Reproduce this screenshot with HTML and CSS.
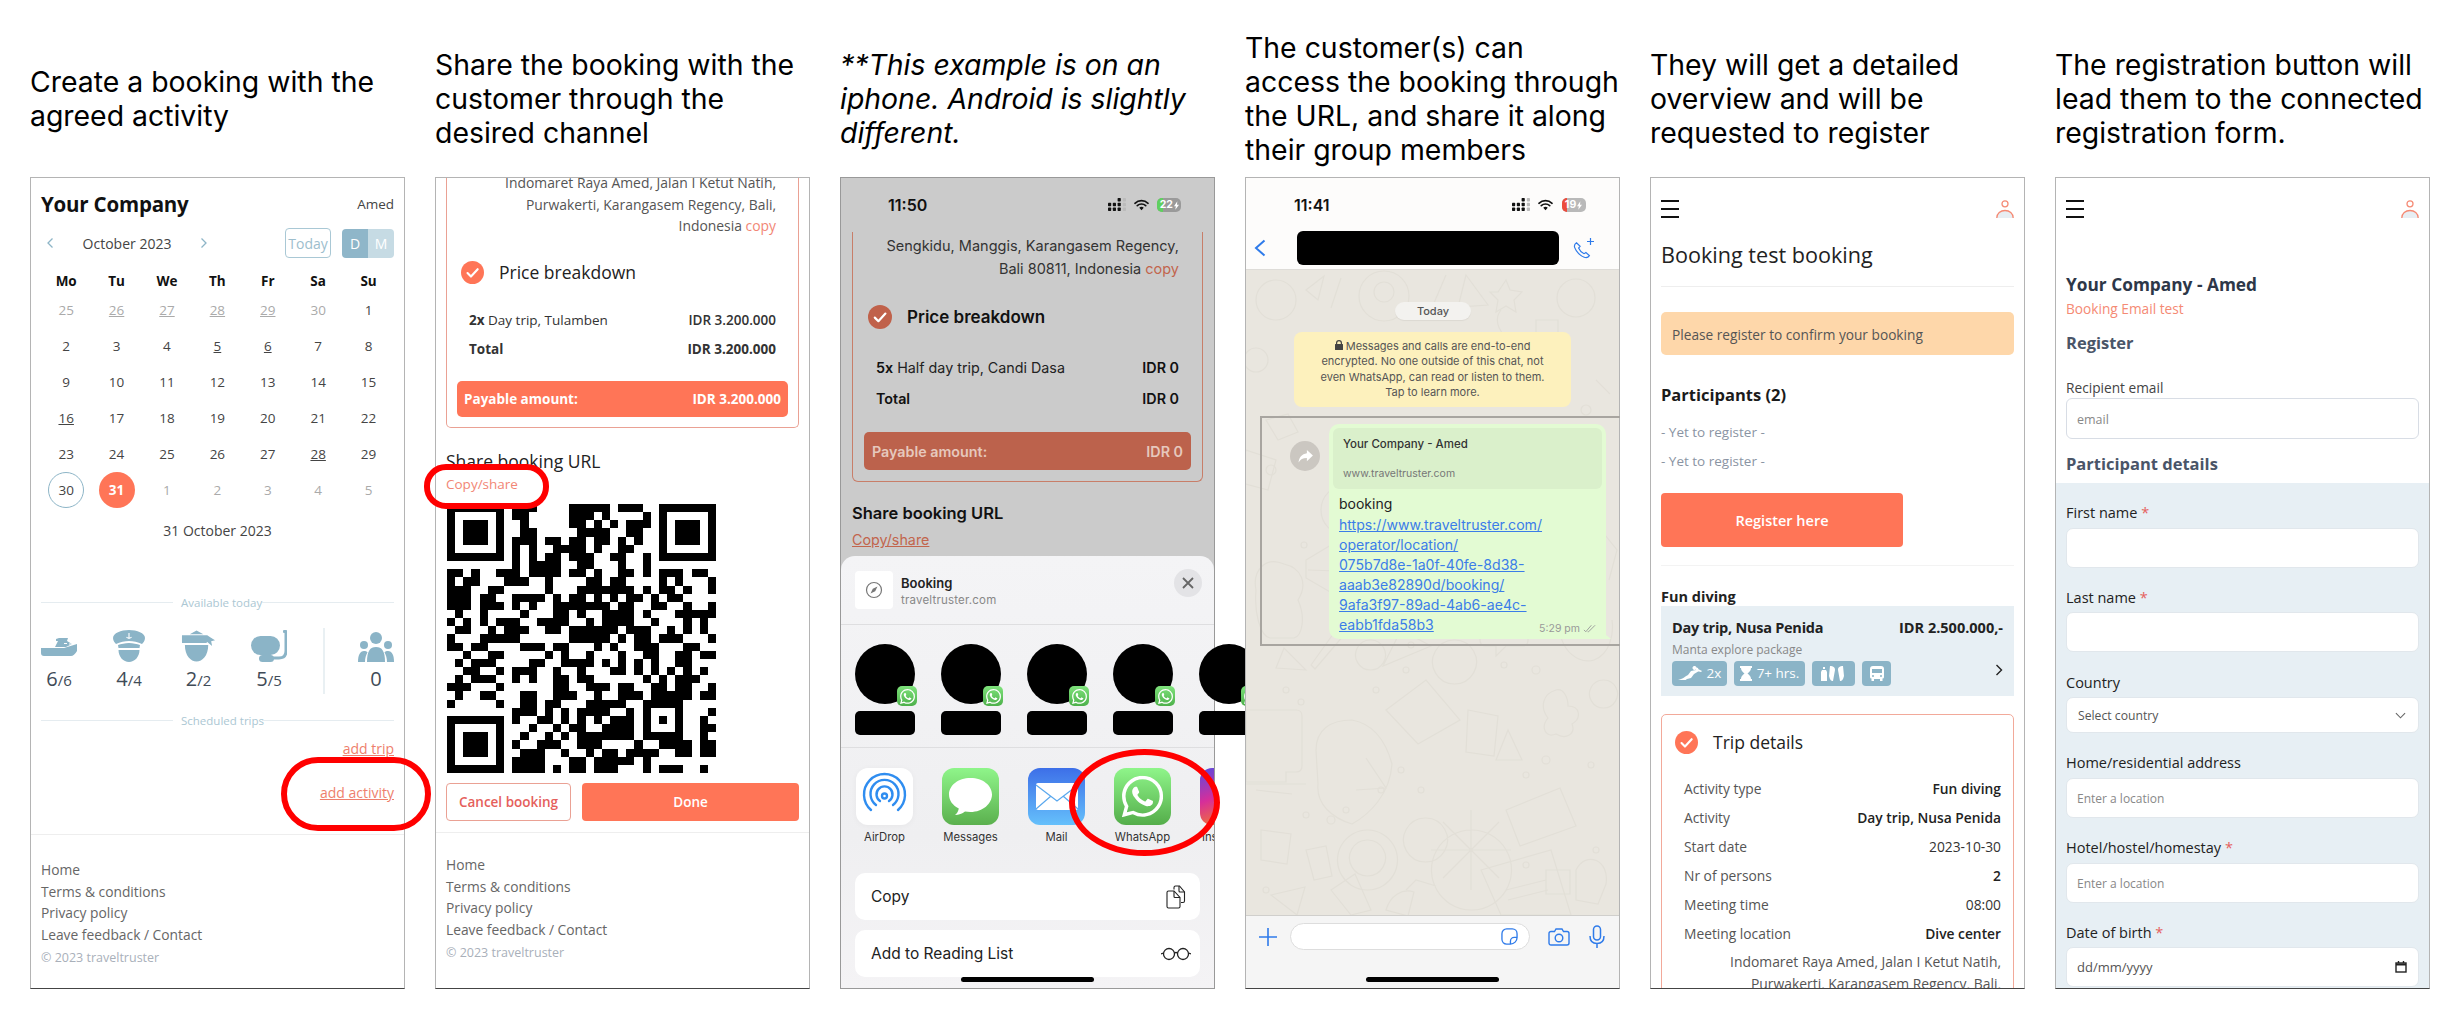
FILE: index.html
```html
<!DOCTYPE html>
<html lang="en">
<head>
<meta charset="utf-8">
<title>Booking flow</title>
<link rel="stylesheet" href="styles.css">
</head>
<body>
<svg class="defs" width="0" height="0" aria-hidden="true">
  <defs>
    <symbol id="check" viewBox="0 0 24 24"><circle cx="12" cy="12" r="12" fill="currentColor"/><path d="M6.8 12.6l3.6 3.6 7-7.6" fill="none" stroke="#fff" stroke-width="2.2" stroke-linecap="round" stroke-linejoin="round"/></symbol>
    <symbol id="wa" viewBox="0 0 24 24"><path fill="#fff" d="M17.472 14.382c-.297-.149-1.758-.867-2.03-.967-.273-.099-.471-.148-.67.15-.197.297-.767.966-.94 1.164-.173.199-.347.223-.644.075-.297-.15-1.255-.463-2.39-1.475-.883-.788-1.48-1.761-1.653-2.059-.173-.297-.018-.458.13-.606.134-.133.298-.347.446-.52.149-.174.198-.298.298-.497.099-.198.05-.371-.025-.52-.075-.149-.669-1.612-.916-2.207-.242-.579-.487-.5-.669-.51-.173-.008-.371-.01-.57-.01-.198 0-.52.074-.792.372-.272.297-1.04 1.016-1.04 2.479 0 1.462 1.065 2.875 1.213 3.074.149.198 2.096 3.2 5.077 4.487.709.306 1.262.489 1.694.625.712.227 1.36.195 1.871.118.571-.085 1.758-.719 2.006-1.413.248-.694.248-1.289.173-1.413-.074-.124-.272-.198-.57-.347m-5.421 7.403h-.004a9.87 9.87 0 01-5.031-1.378l-.361-.214-3.741.982.998-3.648-.235-.374a9.86 9.86 0 01-1.51-5.26c.001-5.45 4.436-9.884 9.888-9.884 2.64 0 5.122 1.03 6.988 2.898a9.825 9.825 0 012.893 6.994c-.003 5.45-4.437 9.884-9.885 9.884m8.413-18.297A11.815 11.815 0 0012.05 0C5.495 0 .16 5.335.157 11.892c0 2.096.547 4.142 1.588 5.945L.057 24l6.305-1.654a11.882 11.882 0 005.683 1.448h.005c6.554 0 11.89-5.335 11.893-11.893a11.821 11.821 0 00-3.48-8.413z"/></symbol>
    <symbol id="burger" viewBox="0 0 18 18"><path d="M0 1h18M0 9h18M0 17h18" stroke="#111" stroke-width="2"/></symbol>
    <symbol id="user" viewBox="0 0 18 18"><path d="M1 18c0-4.500 3.500-7 8-7s8 2.500 8 7z" fill="#e7eef3"/><path d="M.8 18c0-4.500 3.700-7.500 8.200-7.500s8.200 3 8.200 7.500" fill="none" stroke="#f58a74" stroke-width="1.300"/><circle cx="9" cy="3.800" r="3" fill="none" stroke="#f58a74" stroke-width="1.300"/></symbol>
    <symbol id="signal" viewBox="0 0 18 14"><g fill="#111"><rect x="0" y="9.500" width="3.200" height="3.500" rx=".7"/><rect x="0" y="4.800" width="3.200" height="3.500" rx=".7"/><rect x="4.800" y="9.500" width="3.200" height="3.500" rx=".7"/><rect x="4.800" y="4.800" width="3.200" height="3.500" rx=".7"/><rect x="9.600" y="9.500" width="3.200" height="3.500" rx=".7"/><rect x="9.600" y="4.800" width="3.200" height="3.500" rx=".7"/><rect x="9.600" y="0" width="3.200" height="3.500" rx=".7"/></g><g fill="#bbb"><rect x="14.800" y="0" width="3.200" height="3.500" rx=".7"/><rect x="14.800" y="4.800" width="3.200" height="3.500" rx=".7"/><rect x="14.800" y="9.500" width="3.200" height="3.500" rx=".7"/></g></symbol>
    <symbol id="wifi" viewBox="0 0 16 12"><path d="M1 4.200a10 10 0 0 1 14 0M3.500 6.700a6.500 6.500 0 0 1 9 0" fill="none" stroke="#111" stroke-width="1.700" stroke-linecap="round"/><path d="M8 11.500L5.600 9a3.400 3.400 0 0 1 4.800 0z" fill="#111"/></symbol>
  </defs>
</svg>

<main class="board">

  <section class="col">
    <h2 class="cap">Create a booking with the agreed activity</h2>
    <div class="frame">
      <div class="co-head"><strong class="co-name">Your Company</strong><span class="co-loc">Amed</span></div>
      <div class="month-row">
        <div class="month-nav">
          <svg class="chev" viewBox="0 0 8 12"><path d="M6.500 1.500L2 6l4.500 4.500"/></svg>
          <span class="month-name">October 2023</span>
          <svg class="chev" viewBox="0 0 8 12"><path d="M1.500 1.500L6 6l-4.500 4.500"/></svg>
        </div>
        <button class="today">Today</button>
        <div class="toggle"><span class="tog-d">D</span><span class="tog-m">M</span></div>
      </div>
      <div class="cal">
        <b>Mo</b><b>Tu</b><b>We</b><b>Th</b><b>Fr</b><b>Sa</b><b>Su</b>
        <span class="off">25</span><span class="off u">26</span><span class="off u">27</span><span class="off u">28</span><span class="off u">29</span><span class="off">30</span><span>1</span>
        <span>2</span><span>3</span><span>4</span><span class="u">5</span><span class="u">6</span><span>7</span><span>8</span>
        <span>9</span><span>10</span><span>11</span><span>12</span><span>13</span><span>14</span><span>15</span>
        <span class="u">16</span><span>17</span><span>18</span><span>19</span><span>20</span><span>21</span><span>22</span>
        <span>23</span><span>24</span><span>25</span><span>26</span><span>27</span><span class="u">28</span><span>29</span>
        <span><i class="ring">30</i></span><span><i class="sel">31</i></span><span class="off">1</span><span class="off">2</span><span class="off">3</span><span class="off">4</span><span class="off">5</span>
      </div>
      <p class="cal-date">31 October 2023</p>
      <div class="rule rule-a"><span>Available today</span></div>
      <div class="stats">
        <div class="stat stat-boat">
          <svg class="ic-boat" viewBox="0 0 36 18"><path fill="#8bb4c7" d="M0 10h23l13-4v7q-3 5-6 5H3q-3 0-3-3zM14 9l3-6h-2V1l3-1h9l-1 3 5 3-6 3z"/><path d="M23 5.500h3M28 6h3" stroke="#fff" stroke-width="1"/></svg>
          <div class="num">6<small>/6</small></div>
        </div>
        <div class="stat stat-cap">
          <svg class="ic-cap" viewBox="0 0 32 32"><path fill="#8bb4c7" d="M16 0C8 0 0 3 0 8c0 3 2 5 3 6 4-2 9-3 13-3s9 1 13 3c1-1 3-3 3-6 0-5-8-8-16-8zM5 15c3-1 7-2 11-2s8 1 11 2l-.5 3H5.500zM5.500 20h21c0 7-5 12-10.500 12S5.500 27 5.500 20z"/><path d="M16 3v6M13.500 7c1 1.500 4 1.500 5 0" stroke="#fff" stroke-width="1.100" fill="none"/></svg>
          <div class="num">4<small>/4</small></div>
        </div>
        <div class="stat stat-hat">
          <svg class="ic-hat" viewBox="0 0 36 32"><path fill="#8bb4c7" d="M16 0l7 4H9zM1 5h26l3 2 5 3-4 1 1 5-5-4-1 1H1zM4 15h24c0 11-6 17-12 17S4 26 4 15z"/></svg>
          <div class="num">2<small>/2</small></div>
        </div>
        <div class="stat stat-mask">
          <svg class="ic-mask" viewBox="0 0 36 32"><rect x="0" y="6" width="29" height="19" rx="9.500" fill="#8bb4c7"/><path d="M35 2v19q0 7-7 7h-6" fill="none" stroke="#8bb4c7" stroke-width="3" stroke-linecap="round"/><rect x="8" y="25" width="15" height="7" rx="3.500" fill="#8bb4c7"/><rect x="32" y="0" width="4" height="3" rx="1" fill="#8bb4c7"/></svg>
          <div class="num">5<small>/5</small></div>
        </div>
        <div class="stat stat-people">
          <svg class="ic-people" viewBox="0 0 36 30"><g fill="#8bb4c7"><circle cx="18" cy="6" r="6"/><circle cx="6" cy="13" r="4"/><circle cx="30" cy="13" r="4"/><path d="M9 30c0-11 3-15 9-15s9 4 9 15zM0 30c0-7 2-11 6-11 2 0 3 .5 3.500 1.500C8 23 7 26 7 30zM36 30c0-7-2-11-6-11-2 0-3 .5-3.500 1.500C28 23 29 26 29 30z"/></g></svg>
          <div class="num">0</div>
        </div>
      </div>
      <div class="rule rule-b"><span>Scheduled trips</span></div>
      <a class="add add-trip">add trip</a>
      <a class="add add-act">add activity</a>
      <footer class="foot foot-a">
        <a>Home</a><a>Terms &amp; conditions</a><a>Privacy policy</a><a>Leave feedback / Contact</a><small>© 2023 traveltruster</small>
      </footer>
    </div>
  </section>

  <section class="col">
    <h2 class="cap">Share the booking with the customer through the desired channel</h2>
    <div class="frame">
      <div class="pcard">
        <p class="addr">Indomaret Raya Amed, Jalan I Ketut Natih,<br>Purwakerti, Karangasem Regency, Bali,<br>Indonesia <span class="sal">copy</span></p>
        <div class="chk-head"><svg class="chk"><use href="#check"/></svg><span>Price breakdown</span></div>
        <div class="prow"><span><b>2x</b> Day trip, Tulamben</span><em>IDR 3.200.000</em></div>
        <div class="prow"><b>Total</b><b>IDR 3.200.000</b></div>
        <div class="pay"><span>Payable amount:</span><span>IDR 3.200.000</span></div>
      </div>
      <h3 class="share">Share booking URL</h3>
      <a class="copyshare">Copy/share</a>
      <svg class="qr" viewBox="0 0 33 33" shape-rendering="crispEdges">
        <g fill="#000">
          <path d="M0 0h7v7H0zM1 1v5h5V1zM2 2h3v3H2zM26 0h7v7h-7zM27 1v5h5V1zM28 2h3v3h-3zM0 26h7v7H0zM1 27v5h5v-5zM2 28h3v3H2z" fill-rule="evenodd"/>
        </g>
        <path stroke="#000" stroke-width="1" fill="none" d="M8 .5h3M15 .5h5M21 .5h3M8 1.500h2M15 1.500h3M19 1.500h1M24 1.500h1M9 2.500h1M15 2.500h2M18 2.500h1M20 2.500h1M22 2.500h3M9 3.500h2M16 3.500h4M22 3.500h2M8 4.500h3M12 4.500h2M15 4.500h2M18 4.500h2M21 4.500h1M23 4.500h1M8 5.500h1M10 5.500h1M13 5.500h4M18 5.500h1M21 5.500h2M8 6.500h1M10 6.500h1M12 6.500h2M15 6.500h3M20 6.500h2M24 6.500h1M8 7.500h1M10 7.500h4M16 7.500h2M21 7.500h1M24 7.500h1M0 8.500h2M3 8.500h1M6 8.500h3M10 8.500h4M15 8.500h2M18 8.500h1M21 8.500h2M24 8.500h1M26 8.500h3M30 8.500h2M0 9.500h1M2 9.500h2M7 9.500h3M12 9.500h1M17 9.500h2M20 9.500h2M26 9.500h1M28 9.500h1M32 9.500h1M0 10.500h3M5 10.500h2M12 10.500h1M16 10.500h7M24 10.500h1M26 10.500h2M29 10.500h1M32 10.500h1M0 11.500h3M4 11.500h2M8 11.500h4M13 11.500h1M15 11.500h2M18 11.500h1M20 11.500h1M22 11.500h2M25 11.500h1M27 11.500h2M0 12.500h3M4 12.500h3M8 12.500h1M10 12.500h1M13 12.500h7M21 12.500h2M25 12.500h2M29 12.500h1M32 12.500h1M1 13.500h1M4 13.500h1M9 13.500h1M13 13.500h2M16 13.500h1M19 13.500h4M24 13.500h1M28 13.500h5M0 14.500h1M2 14.500h1M4 14.500h1M6 14.500h3M11 14.500h4M17 14.500h1M19 14.500h4M25 14.500h1M29 14.500h1M31 14.500h1M1 15.500h2M5 15.500h1M7 15.500h3M12 15.500h2M15 15.500h6M22 15.500h3M27 15.500h1M29 15.500h1M31 15.500h1M0 16.500h1M4 16.500h5M15 16.500h5M21 16.500h1M23 16.500h2M26 16.500h3M32 16.500h1M0 17.500h2M3 17.500h2M9 17.500h3M13 17.500h2M18 17.500h1M20 17.500h1M23 17.500h3M29 17.500h2M2 18.500h1M5 18.500h2M12 18.500h1M14 18.500h1M17 18.500h1M21 18.500h1M24 18.500h2M28 18.500h2M31 18.500h2M1 19.500h1M3 19.500h3M10 19.500h2M14 19.500h4M19 19.500h1M21 19.500h1M23 19.500h1M25 19.500h1M28 19.500h2M2 20.500h2M6 20.500h1M8 20.500h3M13 20.500h1M16 20.500h1M20 20.500h2M23 20.500h1M25 20.500h1M27 20.500h1M29 20.500h1M31 20.500h1M1 21.500h1M3 21.500h3M8 21.500h1M10 21.500h1M13 21.500h2M16 21.500h2M24 21.500h1M26 21.500h1M28 21.500h3M0 22.500h3M6 22.500h1M13 22.500h2M17 22.500h3M21 22.500h2M25 22.500h2M28 22.500h2M32 22.500h1M1 23.500h1M4 23.500h2M9 23.500h2M13 23.500h3M18 23.500h1M21 23.500h3M25 23.500h5M31 23.500h2M0 24.500h1M6 24.500h1M9 24.500h2M12 24.500h2M17 24.500h5M24 24.500h5M8 25.500h3M12 25.500h1M14 25.500h1M16 25.500h4M22 25.500h1M24 25.500h1M28 25.500h1M32 25.500h1M8 26.500h1M11 26.500h2M14 26.500h1M16 26.500h1M18 26.500h1M20 26.500h3M24 26.500h1M26 26.500h1M28 26.500h1M31 26.500h1M10 27.500h1M13 27.500h1M15 27.500h2M19 27.500h4M24 27.500h1M28 27.500h1M31 27.500h2M9 28.500h1M12 28.500h1M14 28.500h1M16 28.500h7M24 28.500h5M31 28.500h1M8 29.500h1M11 29.500h3M16 29.500h3M23 29.500h1M26 29.500h4M31 29.500h2M9 30.500h3M14 30.500h1M17 30.500h1M19 30.500h2M22 30.500h4M28 30.500h2M31 30.500h2M8 31.500h4M15 31.500h2M18 31.500h5M24 31.500h1M8 32.500h4M13 32.500h1M15 32.500h2M18 32.500h3M24 32.500h1M26 32.500h3M31 32.500h1"/>
      </svg>
      <div class="actions"><button class="btn-cancel">Cancel booking</button><button class="btn-done">Done</button></div>
      <footer class="foot foot-b">
        <a>Home</a><a>Terms &amp; conditions</a><a>Privacy policy</a><a>Leave feedback / Contact</a><small>© 2023 traveltruster</small>
      </footer>
    </div>
  </section>

  <section class="col">
    <h2 class="cap cap-it">**This example is on an iphone. Android is slightly different.</h2>
    <div class="frame frame-share">
      <div class="status status-share">
        <span class="clock">11:50</span>
        <svg class="st-signal"><use href="#signal"/></svg>
        <svg class="st-wifi"><use href="#wifi"/></svg>
        <span class="batt batt-g"><span class="batt-fill"></span><span class="batt-t">22<svg viewBox="0 0 6 10"><path fill="#fff" d="M4 0L0 6h2.200L1.600 10 6 4H3.600z"/></svg></span></span>
      </div>
      <div class="dim-card">
        <p class="addr">Sengkidu, Manggis, Karangasem Regency,<br>Bali 80811, Indonesia <span class="dim-sal">copy</span></p>
        <div class="chk-head chk-dim"><svg class="chk"><use href="#check"/></svg><span>Price breakdown</span></div>
        <div class="prow"><span><b>5x</b> Half day trip, Candi Dasa</span><b>IDR 0</b></div>
        <div class="prow prow-total"><b>Total</b><b>IDR 0</b></div>
        <div class="pay pay-dim"><span>Payable amount:</span><span>IDR 0</span></div>
      </div>
      <h3 class="share share-dim">Share booking URL</h3>
      <a class="copyshare cs-dim">Copy/share</a>
      <div class="sheet">
        <div class="sh-head">
          <span class="sh-thumb"><svg viewBox="0 0 18 18"><circle cx="9" cy="9" r="7.500" fill="none" stroke="#777" stroke-width="1.200"/><path d="M12.500 5.500L10.200 10.200 5.500 12.500 7.800 7.800z" fill="#777"/></svg></span>
          <div class="sh-title"><strong>Booking</strong><span>traveltruster.com</span></div>
          <span class="sh-close"><svg viewBox="0 0 12 12"><path d="M1 1l10 10M11 1L1 11" stroke="#666" stroke-width="1.800"/></svg></span>
        </div>
        <div class="contacts">
          <div class="contact"><i class="av"></i><span class="wab"><svg><use href="#wa"/></svg></span><i class="nm"></i></div>
          <div class="contact"><i class="av"></i><span class="wab"><svg><use href="#wa"/></svg></span><i class="nm"></i></div>
          <div class="contact"><i class="av"></i><span class="wab"><svg><use href="#wa"/></svg></span><i class="nm"></i></div>
          <div class="contact"><i class="av"></i><span class="wab"><svg><use href="#wa"/></svg></span><i class="nm"></i></div>
          <div class="contact"><i class="av"></i><span class="wab"><svg><use href="#wa"/></svg></span><i class="nm"></i></div>
        </div>
        <div class="apps">
          <div class="app"><span class="aic aic-air"><svg viewBox="0 0 57 57" fill="none" stroke="#2f8df0" stroke-width="2.400" stroke-linecap="round"><path d="M15 42a20.500 20.500 0 1 1 27 0"/><path d="M20 37a14 14 0 1 1 17 0"/><path d="M24 33a8 8 0 1 1 9 0"/><circle cx="28.500" cy="28" r="2.500"/></svg></span><span class="alb">AirDrop</span></div>
          <div class="app"><span class="aic aic-msg"><svg viewBox="0 0 57 57"><path fill="#fff" d="M28.500 10C16 10 7 17.500 7 26.500c0 6 3.800 11 9.800 14-.4 2.500-1.800 5-3.800 6.500 3.800 0 7.300-1.300 10-3.500 1.700.3 3.500.5 5.500.5C41 44 50 35.500 50 26.500S41 10 28.500 10z"/></svg></span><span class="alb">Messages</span></div>
          <div class="app"><span class="aic aic-mail"><svg viewBox="0 0 57 57"><rect x="8" y="15" width="42" height="27" rx="2" fill="#fff"/><path d="M8 17l21 16 21-16M8 41l15-13M50 41L35 28" fill="none" stroke="#5aa8ee" stroke-width="1.200"/></svg></span><span class="alb">Mail</span></div>
          <div class="app"><span class="aic aic-wa"><svg viewBox="-4.500 -4.500 33 33"><use href="#wa" width="24" height="24"/></svg></span><span class="alb">WhatsApp</span></div>
          <div class="app"><span class="aic aic-ig"></span><span class="alb">Instagram</span></div>
        </div>
        <div class="sh-act sh-act-a"><span>Copy</span><svg viewBox="0 0 20 24" fill="none" stroke="#222" stroke-width="1.100"><path d="M8 4.500V2.500q0-1.500 1.500-1.500h4l5 6v9q0 1.500-1.500 1.500H15"/><path d="M13 1v5q0 1 1 1h4.500"/><path d="M1 7.500Q1 6 2.500 6H8l6 6.500v9q0 1.500-1.500 1.500h-10Q1 23 1 21.500z"/><path d="M8 6v5.500q0 1 1 1h5"/></svg></div>
        <div class="sh-act sh-act-b"><span>Add to Reading List</span><svg viewBox="0 0 30 14" fill="none" stroke="#222" stroke-width="1.300"><circle cx="8" cy="7" r="5.500"/><circle cx="22" cy="7" r="5.500"/><path d="M13.500 6q1.500-1 3 0M2.500 6L0 7M27.500 6l2.500 1"/></svg></div>
        <i class="homebar homebar-a"></i>
      </div>
    </div>
  </section>

  <section class="col">
    <h2 class="cap">The customer(s) can access the booking through the URL, and share it along their group members</h2>
    <div class="frame frame-wa">
      <div class="wa-top">
        <div class="status status-wa">
          <span class="clock">11:41</span>
          <svg class="st-signal"><use href="#signal"/></svg>
          <svg class="st-wifi"><use href="#wifi"/></svg>
          <span class="batt batt-r"><span class="batt-fill"></span><span class="batt-t">19<svg viewBox="0 0 6 10"><path fill="#fff" d="M4 0L0 6h2.200L1.600 10 6 4H3.600z"/></svg></span></span>
        </div>
        <div class="wa-nav">
          <svg class="wa-back" viewBox="0 0 12 18"><path d="M10.500 1.500L2 9l8.500 7.500" fill="none" stroke="#2f7bea" stroke-width="2"/></svg>
          <i class="wa-name"></i>
          <svg class="wa-call" viewBox="0 0 22 21" fill="none" stroke="#2f7bea" stroke-width="1.200"><path d="M3.500 4.800C1.500 6 1 7.500 1.700 9.600c1.400 3.800 5.500 8.200 9.500 9.700 2.200.8 4 .2 5.200-1.700l-3.500-3-1.800 1.100c-2.300-1-4.500-3.300-5.500-5.700l1.500-1.800z"/><path d="M15 6.500h7M18.500 3v7" transform="translate(-1 -3)"/></svg>
        </div>
      </div>
      <div class="wa-chat">
        <svg class="wall" viewBox="0 0 373 645" preserveAspectRatio="none" fill="none" stroke="#e2dfd7" stroke-width="1.200">
          <circle cx="30" cy="30" r="20"/><circle cx="138" cy="26" r="25"/><circle cx="138" cy="22" r="10"/><path d="M60 20l18-14-6 24zM95 8l-10 30M200 5l-12 28M220 5l22 30-30 2zM252 22l8-12 4 10 12 2-8 8 2 12-10-6-10 6 2-12-8-8z"/><circle cx="330" cy="28" r="19"/><path d="M60 70l10 8-6 10-10-6zM290 50h22v28h-22z"/><circle cx="10" cy="90" r="12"/><path d="M255 40c-8 10-2 26 14 32M20 150l22-6 10 18-20 8z"/>
          <circle cx="320" cy="115" r="4"/><circle cx="340" cy="140" r="5"/><circle cx="60" cy="130" r="4"/><circle cx="25" cy="200" r="5"/><path d="M0 180l30 10-8 30-30-8zM350 110l14 14M330 200l22 8-4 20-20-6z"/>
          <circle cx="100" cy="240" r="25"/>
          <path d="M10 320c-4-20 10-34 28-26 18 4 24 20 14 36 8 18 4 36-4 38H24c-10-2-16-26-14-48zM60 290l30-18 38 30-30 28-38-22zM62 300l60 2M130 272c4-12 8-24 12-34 4 8 0 24 10 14 2-10 8-12 8 2 6 8 4 30-14 34-12 0-20-8-16-16zM180 295c10-10 20-8 24 2 12 8 14 20 16 24h-48c-4-12 0-20 8-26zM200 290l6-20 10 10 14-4-8 14 8 14-14-4-10 10zM235 280l8 20 18 2-14 10 6 18-16-10-16 10 6-18-14-10 18-2zM285 268l56-16 16 60-56 14zM313 288a15 15 0 1 0 1 0zM355 260l16 20-8 30"/>
          <path d="M60 400l-30-2 8-20zM65 395l30-42 8 6-34 40zM125 370a15 15 0 1 1-1 0zM155 360l-18 36 48-20zM208 370a22 22 0 1 0 1 0zM240 330h36q6 0 6 6v34q0 6-6 6h-16l-10 10v-10h-10q-6 0-6-6v-34q0-6 6-6zM318 340c-14 30 10 56 30 50 16-6 20-26 18-40M328 330l12 34M350 320l-4 30"/>
          <path d="M0 440h50q6 0 6 6v50q0 6-6 6h-10v10H0zM0 514h60M70 480c0-20 14-30 36-30 22 4 34 22 40 44-2 30-22 50-40 60-20-6-36-20-34-40zM110 520l30-2-20-30M140 440l40-30 34 40-42 24zM222 440l30 6-4 40-28-4zM250 490l12-30 14 30zM310 420c-14 4-16 18-8 28-8 10-2 20 8 16 10 6 20 0 16-10 10-6 8-18-4-18 0-8-4-18-12-16zM358 410a14 14 0 1 1-1 0z"/>
          <path d="M260 540l54-22 16 38-56 20zM10 520l36 4M15 560l30 4-4 30-26-4zM60 580l20-4 6 30-18 4zM122 560a30 30 0 1 1-1 0zM122 570a18 18 0 1 1-1 0zM180 548a22 22 0 1 1-1 0zM160 620l10-10 20 6M225 560a40 40 0 1 0 1 0zM225 540v80M185 580h80M197 552l56 56M253 552l-56 56M330 600c10-20 34-10 30 14l-8 20-22-4zM300 600h24v24h-24z"/>
          <path d="M25 625l34-8-8 28zM85 620l24-16 16 36-20 5zM140 640c4-14 16-22 28-18l-6 24zM235 600l70-20 20 65h-70zM260 620l40-10M262 630l40-10"/>
          <g><circle cx="58" cy="275" r="3"/><circle cx="175" cy="262" r="3"/><circle cx="210" cy="255" r="3"/><circle cx="275" cy="290" r="3"/><circle cx="150" cy="345" r="4"/><circle cx="165" cy="375" r="3"/><circle cx="200" cy="345" r="3"/><circle cx="258" cy="395" r="3"/><circle cx="290" cy="400" r="4"/><circle cx="40" cy="420" r="3"/><circle cx="55" cy="432" r="3"/><circle cx="130" cy="420" r="3"/><circle cx="160" cy="400" r="3"/><circle cx="135" cy="520" r="3"/><circle cx="155" cy="500" r="3"/><circle cx="175" cy="520" r="3"/><circle cx="280" cy="505" r="3"/><circle cx="300" cy="490" r="4"/><circle cx="345" cy="495" r="3"/><circle cx="60" cy="545" r="3"/><circle cx="85" cy="550" r="4"/><circle cx="100" cy="540" r="3"/><circle cx="280" cy="595" r="3"/><circle cx="350" cy="580" r="3"/><circle cx="20" cy="620" r="3"/></g>
        </svg>
        <div class="wa-content">
          <span class="wa-today">Today</span>
          <div class="wa-sec"><svg class="wa-lock" viewBox="0 0 8 10"><path fill="#444" d="M1 4V3a3 3 0 0 1 6 0v1h.5q.5 0 .5.5v5q0 .5-.5.5h-7Q0 10 0 9.500v-5Q0 4 .5 4zM2.200 4h3.600V3a1.800 1.800 0 0 0-3.600 0z"/></svg> Messages and calls are end-to-end encrypted. No one outside of this chat, not even WhatsApp, can read or listen to them.<br>Tap to learn more.</div>
          <div class="wa-msgrow">
            <span class="wa-fwd"><svg viewBox="0 0 16 14"><path fill="#fff" d="M9.500 0L16 6l-6.500 6V8.500C5 8.500 2.500 10 .5 13.500 1 8 4 4.500 9.500 3.500z"/></svg></span>
            <div class="wa-bubble">
              <div class="wa-preview"><strong>Your Company - Amed</strong><span>www.traveltruster.com</span></div>
              <p class="wa-text">booking</p>
              <a class="wa-link">https://www.traveltruster.com/<br>operator/location/<br>075b7d8e-1a0f-40fe-8d38-<br>aaab3e82890d/booking/<br>9afa3f97-89ad-4ab6-ae4c-<br>eabb1fda58b3</a>
              <span class="wa-time">5:29 pm <svg viewBox="0 0 14 9" fill="none" stroke="#999" stroke-width="1"><path d="M1 6l2 2 6-7M5 8l1 0 7-7"/></svg></span>
            </div>
          </div>
        </div>
      </div>
      <div class="wa-bottom">
        <svg class="wa-plus" viewBox="0 0 20 20"><path d="M10 1v18M1 10h18" stroke="#2f7bea" stroke-width="1.600"/></svg>
        <div class="wa-input"><svg viewBox="0 0 18 18" fill="none" stroke="#2f7bea" stroke-width="1.400"><path d="M6 1h6a5 5 0 0 1 5 5v4a7 7 0 0 1-7 7H6a5 5 0 0 1-5-5V6a5 5 0 0 1 5-5z"/><path d="M10 17v-3a4 4 0 0 1 4-4h3"/></svg></div>
        <svg class="wa-cam" viewBox="0 0 22 18" fill="none" stroke="#2f7bea" stroke-width="1.400"><path d="M3 3.500h3.500L8 1h6l1.500 2.500H19a2 2 0 0 1 2 2V15a2 2 0 0 1-2 2H3a2 2 0 0 1-2-2V5.500a2 2 0 0 1 2-2z"/><circle cx="11" cy="10" r="3.800"/></svg>
        <svg class="wa-mic" viewBox="0 0 16 24" fill="none" stroke="#2f7bea" stroke-width="1.500"><rect x="4.500" y="1" width="7" height="14" rx="3.500"/><path d="M1 11c0 5 3 7.500 7 7.500s7-2.500 7-7.500M8 18.500V23"/></svg>
        <i class="homebar homebar-b"></i>
      </div>
    </div>
  </section>

  <section class="col">
    <h2 class="cap">They will get a detailed overview and will be requested to register</h2>
    <div class="frame">
      <div class="topbar"><svg class="burger"><use href="#burger"/></svg><svg class="user"><use href="#user"/></svg></div>
      <h1 class="bk-title">Booking test booking</h1>
      <div class="bk-body">
        <div class="alert">Please register to confirm your booking</div>
        <h3 class="parts">Participants (2)</h3>
        <p class="yet">- Yet to register -</p>
        <p class="yet">- Yet to register -</p>
        <button class="reg">Register here</button>
        <h4 class="fun">Fun diving</h4>
        <div class="trip">
          <div class="trip-a"><b class="trip-name">Day trip, Nusa Penida</b><b>IDR 2.500.000,-</b></div>
          <div class="trip-sub">Manta explore package</div>
          <div class="tags">
            <span class="tag tag-1"><svg viewBox="0 0 24 14"><path fill="#fff" d="M0 14c5-1 6-3 10-5l3-4 5-1-1-3 3 1 1 3-5 3-3 4-4 1c-2 2-5 2-9 1zM17 0a2 2 0 1 1-1 0zM20 3l4 2-1 1-4-1z"/></svg>2x</span>
            <span class="tag tag-2"><svg viewBox="0 0 12 15"><path fill="#fff" d="M0 0h12v2h-1c0 3-2 4-3.500 5.500C9 9 11 10 11 13h1v2H0v-2h1c0-3 2-4 3.500-5.500C3 6 1 5 1 2H0z"/></svg>7+ hrs.</span>
            <span class="tag tag-3"><svg viewBox="0 0 27 15"><path fill="#fff" d="M2 4h4l1 2v9H1V6zM3 1h2v2H3zM10 0c3 0 5 1 5 4l-2 11c-2 0-3-1-4-5zM23 0c-3 0-5 1-5 4l2 11c2 0 3-1 4-5z"/></svg></span>
            <span class="tag tag-4"><svg viewBox="0 0 14 15"><path fill="#fff" fill-rule="evenodd" d="M3 0h8q3 0 3 3v8q0 1.500-1.500 1.500V15H10v-2H4v2H1.500v-2.500Q0 12.500 0 11V3q0-3 3-3zM2 3v4h10V3zM3 9a1 1 0 1 0 0 2 1 1 0 0 0 0-2zm8 0a1 1 0 1 0 0 2 1 1 0 0 0 0-2z"/></svg></span>
            <svg class="trip-chev" viewBox="0 0 8 12"><path d="M1.500 1L6.500 6l-5 5" fill="none" stroke="#222" stroke-width="1.400"/></svg>
          </div>
        </div>
        <div class="dcard">
          <div class="chk-head chk-trip"><svg class="chk"><use href="#check"/></svg><span>Trip details</span></div>
          <dl class="dl">
            <div><dt>Activity type</dt><dd class="s">Fun diving</dd></div>
            <div><dt>Activity</dt><dd class="s">Day trip, Nusa Penida</dd></div>
            <div><dt>Start date</dt><dd>2023-10-30</dd></div>
            <div><dt>Nr of persons</dt><dd class="s">2</dd></div>
            <div><dt>Meeting time</dt><dd>08:00</dd></div>
            <div><dt>Meeting location</dt><dd class="s">Dive center</dd></div>
          </dl>
          <p class="addr addr-d">Indomaret Raya Amed, Jalan I Ketut Natih,<br>Purwakerti, Karangasem Regency, Bali,</p>
        </div>
      </div>
    </div>
  </section>

  <section class="col">
    <h2 class="cap">The registration button will lead them to the connected registration form.</h2>
    <div class="frame">
      <div class="topbar"><svg class="burger"><use href="#burger"/></svg><svg class="user"><use href="#user"/></svg></div>
      <div class="reg-head">
        <h1 class="rg-co">Your Company - Amed</h1>
        <p class="rg-sub">Booking Email test</p>
        <h2 class="rg-h rg-h1">Register</h2>
        <label class="rg-lab">Recipient email</label>
        <div class="inp inp-mail">email</div>
        <h2 class="rg-h rg-h2">Participant details</h2>
      </div>
      <div class="form">
        <label class="fl">First name <i>*</i></label><div class="fin"></div>
        <label class="fl">Last name <i>*</i></label><div class="fin"></div>
        <label class="fl">Country</label><div class="fin fin-sel"><span>Select country</span><svg viewBox="0 0 12 7"><path d="M1 1l5 5 5-5" fill="none" stroke="#666" stroke-width="1.200"/></svg></div>
        <label class="fl">Home/residential address</label><div class="fin fin-ph">Enter a location</div>
        <label class="fl">Hotel/hostel/homestay <i>*</i></label><div class="fin fin-ph">Enter a location</div>
        <label class="fl">Date of birth <i>*</i></label><div class="fin fin-date"><span>dd/mm/yyyy</span><svg viewBox="0 0 12 12" fill="none" stroke="#222" stroke-width="1.400"><rect x="1" y="2" width="10" height="9"/><path d="M1 3.500h10" stroke-width="2"/><path d="M3.500 0v2M8.500 0v2"/></svg></div>
      </div>
    </div>
  </section>

  <i class="mark mark-a"></i>
  <i class="mark mark-b"></i>
  <i class="mark mark-c"></i>
  <i class="msg-box"></i>
</main>
</body>
</html>
```

FILE: styles.css
```css
* { box-sizing: border-box; }
html, body { margin: 0; padding: 0; background: #fff; }
body { font-family: "Open Sans", "Noto Sans", sans-serif; font-size: 13.5px; color: #333; }
.defs { position: absolute; }
p, h1, h2, h3, h4, dl, dd { margin: 0; }
button { font-family: inherit; }
a { display: block; }
i { font-style: normal; }

.board { position: relative; display: flex; gap: 30px; width: 2460px; height: 1019px; padding: 0 30px; overflow: hidden; }
.col { width: 375px; display: flex; flex-direction: column; }
.cap { height: 177px; padding-top: 21px; display: flex; align-items: center; margin: 0; font: 400 28.4px/34px "Inter", sans-serif; color: #000; }
.cap-it { font-style: italic; }
.frame { position: relative; width: 375px; height: 812px; border: 1px solid #b4b4b4; border-bottom-color: #444; background: #fff; overflow: hidden; display: flex; flex-direction: column; }

/* calendar */
.co-head { display: flex; justify-content: space-between; align-items: center; height: 24px; margin: 14px 10px 0; }
.co-name { font-size: 20.5px; font-weight: 700; color: #111; letter-spacing: -.2px; }
.co-loc { font-size: 13.5px; color: #444; }
.month-row { display: flex; align-items: center; height: 30px; margin: 12px 10px 0; }
.month-nav { display: flex; align-items: center; width: 173px; padding-left: 5px; }
.chev { width: 8px; height: 12px; fill: none; stroke: #8db5c7; stroke-width: 1.300; flex: none; }
.month-name { width: 146px; text-align: center; font-size: 14px; color: #444; }
.today { width: 46px; height: 30px; margin-left: 71px; padding: 0; border: 1px solid #a9c8d5; border-radius: 4px; background: #fff; color: #9dbecd; font-size: 14px; }
.toggle { display: flex; margin-left: 11px; height: 29px; border-radius: 4px; overflow: hidden; color: #fff; font-size: 14px; }
.toggle span { width: 26px; display: flex; align-items: center; justify-content: center; }
.tog-d { background: #8fb6c9; }
.tog-m { background: #c6dbe4; }
.cal { display: grid; grid-template-columns: repeat(7, 50.4px); grid-template-rows: 22px repeat(6, 36px); margin: 12px 10px 0; text-align: center; }
.cal b { font-size: 13.500px; color: #111; font-weight: 700; line-height: 22px; }
.cal span { font-size: 13.500px; color: #444; line-height: 36px; display: flex; justify-content: center; align-items: center; }
.cal .off { color: #aaa; }
.cal .u { text-decoration: underline; }
.ring, .sel { width: 36px; height: 36px; border-radius: 50%; display: flex; align-items: center; justify-content: center; }
.ring { border: 1px solid #8db5c7; }
.sel { background: #ff7557; color: #fff; font-weight: 700; }
.cal-date { margin-top: 12px; height: 22px; line-height: 22px; text-align: center; font-size: 14px; color: #444; }
.rule { display: flex; align-items: center; height: 18px; margin: 0 10px; gap: 8px; color: #abc7d3; font-size: 11.500px; }
.rule::before, .rule::after { content: ""; flex: 1; height: 1px; background: #e5ecf0; }
.rule span { width: 73px; text-align: center; white-space: nowrap; }
.rule-a { margin-top: 51px; }
.rule-b { margin-top: 17px; }
.stats { display: flex; height: 66px; margin: 17px 10px 0; position: relative; }
.stat { position: relative; }
.stat svg { display: block; }
.stat-boat { width: 36px; margin-right: 36px; }
.ic-boat { width: 36px; height: 18px; margin-top: 10px; margin-bottom: 11px; }
.stat-cap { width: 32px; margin-right: 36px; }
.ic-cap { width: 32px; height: 32px; margin-top: 2px; margin-bottom: 5px; }
.stat-hat { width: 35px; margin-right: 35px; }
.ic-hat { width: 35px; height: 32px; margin-top: 2px; margin-bottom: 5px; }
.stat-mask { width: 36px; margin-right: 71px; }
.ic-mask { width: 36px; height: 32px; margin-top: 2px; margin-bottom: 5px; }
.stat-people { width: 36px; }
.stat-people::before { content: ""; position: absolute; left: -35px; top: 0; width: 2px; height: 66px; background: #e9f0f3; }
.ic-people { width: 36px; height: 30px; margin-top: 4px; margin-bottom: 5px; }
.num { text-align: center; font-size: 20px; line-height: 24px; color: #3f4b57; white-space: nowrap; }
.num small { font-size: 15px; }
.add { text-align: right; margin: 0 10px; color: #ee7f6d; text-decoration: underline; font-size: 14px; line-height: 20px; }
.add-trip { margin-top: 10px; }
.add-act { margin-top: 24px; }
.foot { border-top: 1px solid #eee; padding-left: 10px; color: #666; font-size: 13.800px; line-height: 21.700px; }
.foot a { white-space: nowrap; }
.foot small { display: block; margin-top: 1px; font-size: 12.500px; color: #a9b0ba; }
.foot-a { margin-top: 31px; padding-top: 24px; }
.foot-b { margin-top: 11px; padding-top: 21px; }

/* price card */
.sal { color: #f28675; }
.pcard { margin: -6px 10px 0; border: 1px solid #eaa194; border-top: 0; border-radius: 0 0 5px 5px; padding: 0 10px 10px; height: 256px; flex: none; }
.addr { text-align: right; line-height: 21.700px; padding-right: 12px; color: #555; font-size: 13.900px; white-space: nowrap; }
.chk-head { display: flex; align-items: center; height: 24px; font-size: 17.500px; color: #222; margin-top: 23px; margin-left: 4px; }
.chk { width: 23px; height: 23px; color: #ff7557; margin-right: 15px; flex: none; }
.prow { display: flex; justify-content: space-between; height: 29px; align-items: center; padding: 0 12px 0 12px; font-size: 13.500px; color: #333; }
.prow em { font-style: normal; font-weight: 600; }
.chk-head + .prow { margin-top: 21px; }
.pay { display: flex; justify-content: space-between; align-items: center; height: 36px; margin-top: 18px; padding: 0 7px; background: #ff7557; border-radius: 5px; color: #fff; font-weight: 700; font-size: 13.500px; }
.share { margin: 21px 10px 0; height: 24px; line-height: 24px; font-size: 17.500px; font-weight: 400; color: #222; flex: none; }
.copyshare { margin: 0 10px; line-height: 22px; height: 22px; color: #f28675; font-size: 13.500px; flex: none; }
.qr { width: 271px; height: 269px; margin: 9px 0 0 10px; flex: none; display: block; }
.actions { display: flex; gap: 11px; margin: 10px 10px 0; flex: none; }
.actions button { height: 38px; padding: 0; border-radius: 4px; font-size: 13.500px; font-weight: 600; }
.btn-cancel { width: 125px; background: #fff; border: 1px solid #eaa194; color: #e5605c; }
.btn-done { flex: 1; background: #ff7557; border: 0; color: #fff; }

/* iPhone share sheet */
.frame-share { background: #cbcbcb; overflow: visible; border-color: #999; border-bottom-color: #999; }
.status { display: flex; align-items: center; height: 54px; position: relative; }
.clock { font: 600 16px "Inter", sans-serif; color: #111; }
.status-share .clock { margin-left: 47px; }
.status-wa .clock { margin-left: 48px; }
.st-signal { width: 18px; height: 14px; margin-left: 181px; }
.status-wa .st-signal { margin-left: 182px; }
.st-wifi { width: 15px; height: 12px; margin-left: 8px; }
.batt { position: relative; width: 24px; height: 14px; margin-left: 8px; border-radius: 5px; background: #9a9a9a; overflow: hidden; }
.status-wa .batt { background: #b9b9b9; margin-left: 9px; }
.batt-fill { position: absolute; left: 0; top: 0; bottom: 0; }
.batt-g .batt-fill { width: 6px; background: #5fd05f; }
.batt-r .batt-fill { width: 5px; background: #ec4b3c; }
.batt-t { position: absolute; inset: 0; display: flex; align-items: center; justify-content: center; gap: 1px; color: #fff; font: 700 10.500px/14px "Inter", sans-serif; }
.batt-t svg { width: 5px; height: 9px; }
.dim-card { margin: 0 11px; border: 1px solid #c87e69; border-top: 0; border-radius: 0 0 6px 6px; height: 250px; padding: 0 11px; flex: none; }
.dim-card .addr { padding-right: 12px; padding-top: 2px; font: 400 14.500px/23px "Inter", sans-serif; color: #333; }
.dim-sal { color: #c2654d; }
.chk-dim { font: 600 17px "Inter", sans-serif; color: #111; margin-top: 25px; margin-left: 4px; }
.chk-dim .chk { color: #c0614a; margin-right: 15px; width: 24px; height: 24px; }
.dim-card .prow { padding: 0 12px; font: 400 14.300px "Inter", sans-serif; color: #222; }
.dim-card .prow b { font-weight: 600; color: #111; }
.dim-card .chk-head + .prow { margin-top: 23px; height: 30px; }
.prow-total { margin-top: 1px; height: 30px; }
.pay-dim { margin-top: 19px; height: 38px; background: #bc624c; color: #e6c8bd; font: 600 14.300px "Inter", sans-serif; padding: 0 8px; }
.share-dim { margin: 19px 11px 0; font: 600 16.500px/24px "Inter", sans-serif; color: #111; }
.cs-dim { margin: 5px 11px 0; height: 20px; font: 400 14.300px/20px "Inter", sans-serif; color: #c2654d; text-decoration: underline; }
.sheet { position: relative; flex: 1; margin-top: 6px; border-radius: 14px 14px 0 0; background: linear-gradient(#f4f4f6, #efeff1 65%, #f4f3f5); font-family: "Inter", sans-serif; }
.sh-head { position: relative; display: flex; align-items: center; height: 69px; padding: 0 14px; border-bottom: 1px solid #dedee0; }
.sh-thumb { width: 38px; height: 38px; border-radius: 4px; background: #fff; display: flex; align-items: center; justify-content: center; flex: none; }
.sh-thumb svg { width: 18px; height: 18px; }
.sh-title { margin-left: 8px; margin-top: 3px; display: flex; flex-direction: column; }
.sh-title strong { font-size: 13px; font-weight: 600; line-height: 17px; color: #222; }
.sh-title span { font-size: 11.500px; color: #888; line-height: 17px; letter-spacing: .2px; }
.sh-close { position: absolute; right: 12px; top: 13px; width: 28px; height: 28px; border-radius: 50%; background: #e3e3e6; display: flex; align-items: center; justify-content: center; }
.sh-close svg { width: 12px; height: 12px; }
.contacts { display: flex; gap: 26px; height: 123px; padding: 19px 0 0 14px; border-bottom: 1px solid #dedee0; }
.contact { position: relative; width: 60px; flex: none; }
.av { display: block; width: 60px; height: 60px; background: #000; border-radius: 50%; }
.nm { display: block; width: 60px; height: 24px; margin-top: 7px; background: #000; border-radius: 5px; }
.wab { position: absolute; left: 42px; top: 42px; width: 20px; height: 20px; border-radius: 5px; background: linear-gradient(#7fe37c, #4db04a); display: flex; align-items: center; justify-content: center; }
.wab svg { width: 15px; height: 15px; }
.apps { display: flex; gap: 29px; height: 125px; padding: 20px 0 0 15px; overflow: hidden; }
.app { width: 57px; flex: none; display: flex; flex-direction: column; align-items: center; }
.aic { display: block; width: 57px; height: 57px; border-radius: 12px; flex: none; }
.aic svg { display: block; width: 57px; height: 57px; }
.aic-air { background: #fff; box-shadow: 0 1px 6px rgba(0,0,0,.04); }
.aic-msg { background: linear-gradient(#8ff58a, #5bb04e); }
.aic-mail { background: linear-gradient(#3d6fe8, #65c0fb); }
.aic-wa { background: linear-gradient(#8ff58a, #54ad4a); }
.aic-ig { background: linear-gradient(160deg, #5a4ae0, #d62e9a 45%, #f5782c 85%, #f8b32e); }
.alb { margin-top: 4px; font-size: 11.300px; line-height: 16px; color: #333; white-space: nowrap; }
.sh-act { display: flex; align-items: center; justify-content: space-between; height: 47px; margin: 0 14px; padding: 0 14px 0 16px; border-radius: 10px; background: #fff; font-size: 15.500px; color: #222; }
.sh-act svg { flex: none; }
.sh-act-a svg { width: 20px; height: 24px; }
.sh-act-b { margin-top: 10px; }
.sh-act-b svg { width: 30px; height: 14px; margin-right: -5px; }
.homebar { position: absolute; height: 5px; width: 133px; border-radius: 3px; background: #000; }
.homebar-a { left: 120px; bottom: 6px; }
.homebar-b { left: 120px; bottom: 6px; }

/* WhatsApp */
.frame-wa { font-family: "Inter", sans-serif; }
.wa-top { height: 92px; background: #fdfcfb; border-bottom: 1px solid #dedcd8; flex: none; }
.wa-nav { display: flex; align-items: center; height: 34px; margin-top: -1px; }
.wa-back { width: 12px; height: 18px; margin-left: 8px; flex: none; }
.wa-name { width: 262px; height: 34px; margin-left: 31px; background: #000; border-radius: 6px; flex: none; }
.wa-call { width: 22px; height: 21px; margin-left: 14px; flex: none; }
.wa-chat { position: relative; flex: 1; background: #e9e6df; overflow: hidden; }
.wall { position: absolute; left: 0; top: 0; width: 100%; height: 100%; }
.wa-content { position: relative; display: flex; flex-direction: column; align-items: flex-start; }
.wa-today { margin: 32px 0 0 149px; width: 76px; height: 18px; line-height: 18px; text-align: center; font-size: 11px; font-weight: 500; color: #555; background: #f3f2ef; border-radius: 9px; box-shadow: 0 1px 1px rgba(0,0,0,.06); }
.wa-sec { margin: 12px 0 0 48px; width: 277px; height: 75px; padding: 7px 14px; text-align: center; font-size: 11px; line-height: 15.300px; color: #555; background: #fdf1bd; border-radius: 8px; }
.wa-lock { width: 8px; height: 10px; }
.wa-msgrow { display: flex; align-items: flex-start; margin: 17px 0 0 44px; }
.wa-fwd { width: 30px; height: 30px; border-radius: 50%; background: #cbc7c1; margin: 17px 8px 0 0; flex: none; display: flex; align-items: center; justify-content: center; }
.wa-fwd svg { width: 15px; height: 13px; }
.wa-bubble { position: relative; margin-left: 1px; width: 277px; height: 215px; padding: 4px; background: #e3fbd3; border-radius: 10px 10px 0 10px; }
.wa-bubble::after { content: ""; position: absolute; right: -5px; bottom: 0; width: 10px; height: 8px; background: #e3fbd3; clip-path: polygon(0 0, 50% 50%, 100% 100%, 0 100%); }
.wa-preview { height: 61px; padding: 9px 10px; border-radius: 6px; background: #daf0cb; display: flex; flex-direction: column; }
.wa-preview strong { font-size: 11.500px; font-weight: 500; line-height: 15px; color: #333; white-space: nowrap; }
.wa-preview span { margin-top: 15px; font-size: 10.500px; line-height: 14px; color: #777; }
.wa-text { margin: 5px 6px 0; font-size: 14px; line-height: 20px; color: #222; }
.wa-link { margin: 1px 6px 0; font-size: 14.100px; line-height: 20px; color: #3b7de8; text-decoration: underline; white-space: nowrap; }
.wa-time { position: absolute; right: 10px; bottom: 4px; font-size: 10.500px; color: #999; display: flex; align-items: center; gap: 3px; }
.wa-time svg { width: 13px; height: 9px; }
.wa-bottom { position: relative; display: flex; align-items: center; height: 73px; padding-bottom: 38px; padding-top: 7px; background: #f5f5f5; border-top: 1px solid #d0cfcc; flex: none; }
.wa-plus { width: 20px; height: 20px; margin-left: 12px; flex: none; }
.wa-input { width: 240px; height: 27px; margin-left: 12px; display: flex; align-items: center; justify-content: flex-end; padding-right: 11px; background: #fff; border: 1px solid #ddd; border-radius: 14px; }
.wa-input svg { width: 17px; height: 17px; }
.wa-cam { width: 22px; height: 18px; margin-left: 18px; }
.wa-mic { width: 16px; height: 24px; margin-left: 19px; }

/* booking */
.topbar { display: flex; justify-content: space-between; align-items: center; height: 20px; margin: 21px 10px 0; flex: none; }
.burger { width: 18px; height: 18px; }
.user { width: 18px; height: 18px; }
.bk-title { margin: 21px 10px 0; padding-bottom: 15px; height: 47px; line-height: 30px; font-size: 21.600px; font-weight: 400; color: #222; border-bottom: 1px solid #eee; white-space: nowrap; flex: none; }
.bk-body { padding: 0 10px; flex: none; }
.alert { margin-top: 25px; height: 43px; line-height: 45px; padding-left: 11px; background: #fed7aa; border-radius: 5px; color: #555; font-size: 13.700px; }
.parts { margin-top: 28px; height: 24px; line-height: 24px; font-size: 16.500px; font-weight: 700; color: #1b1b1b; }
.yet { height: 29px; line-height: 29px; color: #8a94a3; font-size: 13.500px; }
.parts + .yet { margin-top: 11px; }
.reg { display: block; width: 242px; height: 54px; margin-top: 17px; padding: 0; border: 0; border-radius: 4px; background: #ff7557; color: #fff; font-size: 14.500px; font-weight: 600; }
.fun { margin-top: 18px; padding-top: 20px; height: 41px; line-height: 22px; border-top: 1px solid #f3f3f3; font-size: 14.500px; font-weight: 700; color: #222; }
.trip { height: 90px; padding: 10px 11px; background: #e7eff4; }
.trip-a { display: flex; justify-content: space-between; line-height: 24px; font-size: 14.500px; color: #222; }
.trip-name { letter-spacing: -.25px; }
.trip-sub { font-size: 12px; line-height: 20px; color: #888; }
.tags { display: flex; align-items: center; gap: 7px; height: 26px; }
.tag { display: flex; align-items: center; justify-content: center; gap: 5px; height: 25px; border-radius: 4px; background: #8bb4c7; color: #fff; font-size: 13.500px; }
.tag-1 { width: 55px; }
.tag-1 svg { width: 24px; height: 14px; }
.tag-2 { width: 71px; }
.tag-2 svg { width: 12px; height: 15px; }
.tag-3 { width: 43px; }
.tag-3 svg { width: 27px; height: 15px; }
.tag-4 { width: 29px; }
.tag-4 svg { width: 14px; height: 15px; }
.trip-chev { width: 8px; height: 12px; margin-left: auto; margin-top: -6px; }
.dcard { margin-top: 18px; height: 290px; padding-top: 15px; border: 1px solid #f2a99a; border-radius: 5px; }
.chk-trip { margin: 0 0 0 13px; }
.dl { margin: 20px 0 0; }
.dl div { display: flex; justify-content: space-between; height: 29px; align-items: center; padding: 0 12px 0 22px; }
.dl dt { color: #555; font-size: 13.800px; }
.dl dd { color: #333; font-size: 13.800px; font-weight: 500; }
.dl dd.s { font-weight: 600; color: #222; }
.addr-d { padding-top: 3px; }

/* register */
.reg-head { padding: 0 10px; flex: none; }
.rg-co { margin-top: 54px; line-height: 24px; height: 24px; font-size: 17.300px; font-weight: 700; color: #2d3748; white-space: nowrap; }
.rg-sub { line-height: 24px; height: 24px; font-size: 13.700px; color: #f58a74; }
.rg-h { font-size: 16.500px; font-weight: 700; color: #4a5568; line-height: 24px; height: 24px; }
.rg-h1 { margin-top: 10px; }
.rg-lab { display: block; margin-top: 23px; line-height: 20px; height: 20px; color: #444; font-size: 13.700px; }
.inp { height: 41px; line-height: 42px; padding-left: 10px; border: 1px solid #d8dde5; border-radius: 6px; color: #888; font-size: 12.500px; }
.rg-h2 { margin-top: 13px; }
.form { flex: 1; margin-top: 7px; padding: 20px 10px 0; background: #e7eff4; }
.fl { display: block; height: 20px; line-height: 20px; font-size: 14.500px; font-weight: 500; color: #222; white-space: nowrap; }
.fl i { color: #e5605c; }
.fin { height: 40px; margin: 4.500px 0 20.300px; background: #fff; border: 1px solid #e1e7ec; border-radius: 7px; }
.fin-sel { display: flex; align-items: center; justify-content: space-between; height: 36px; padding: 0 12px 0 11px; font-size: 12.200px; color: #555; }
.fin-sel svg { width: 11px; height: 7px; }
.fin-ph { line-height: 39px; padding-left: 10px; font-size: 12px; color: #888; }
.fin-date { display: flex; align-items: center; justify-content: space-between; padding: 0 11px 0 10px; font-size: 13px; color: #555; }
.fin-date svg { width: 12px; height: 12px; }

/* overlays */
.mark { position: absolute; border: 6px solid #f00; z-index: 3; }
.mark-a { left: 281px; top: 757px; width: 150px; height: 74px; border-radius: 37px; }
.mark-b { left: 424px; top: 464px; width: 125px; height: 45px; border-radius: 22px; }
.mark-c { left: 1069px; top: 749px; width: 151px; height: 107px; border-radius: 50%; }
.msg-box { position: absolute; left: 1260px; top: 416px; width: 360px; height: 230px; border: 2px solid #a8a5a0; border-right: 0; z-index: 2; }
```
